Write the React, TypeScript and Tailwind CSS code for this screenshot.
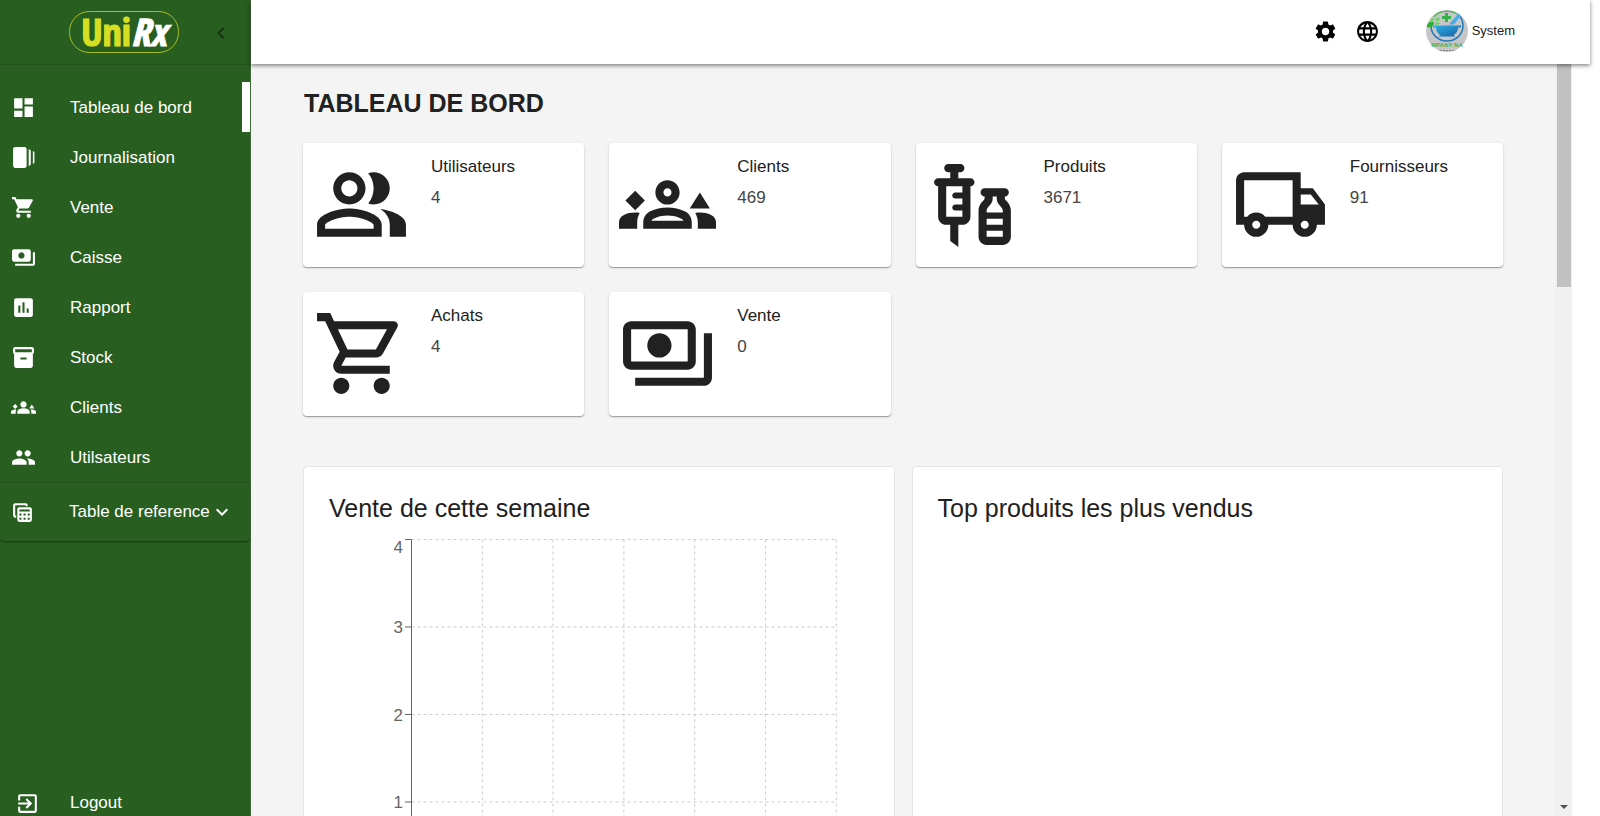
import type { ComponentType } from "react";
import {
  MdAssessment,
  MdChevronLeft,
  MdDashboard,
  MdExitToApp,
  MdExpandMore,
  MdInventory2,
  MdLanguage,
  MdOutlineLocalShipping,
  MdOutlinePayments,
  MdOutlinePeopleAlt,
  MdOutlineShoppingCart,
  MdOutlineTableView,
  MdOutlineVaccines,
  MdPayments,
  MdPeople,
  MdSettings,
  MdShoppingCart,
  MdWebStories,
} from "react-icons/md";

type IconType = ComponentType<{ className?: string }>;

const sides =
  "M4 13.41 1.59 11 4 8.59 6.41 11zM17.5 13 20 9l2.5 4zM5.13 14.1C4.76 14.04 4.39 14 4 14c-.99 0-1.93.21-2.78.58C.48 14.9 0 15.62 0 16.43V18h4.5v-1.61c0-.83.23-1.61.63-2.29zM24 16.43c0-.81-.48-1.53-1.22-1.85C21.93 14.21 20.99 14 20 14c-.39 0-.76.04-1.13.1.4.68.63 1.46.63 2.29V18H24z";
const body =
  "M12 12.75c-1.63 0-3.07.39-4.24.9C6.68 14.13 6 15.21 6 16.38V18h12v-1.61c0-1.18-.68-2.26-1.76-2.73-1.17-.52-2.61-.91-4.24-.91z";
const head = "M12 6c1.66 0 3 1.34 3 3s-1.34 3-3 3-3-1.34-3-3 1.34-3 3-3z";

const GroupsFilled: IconType = ({ className }) => (
  <svg viewBox="0 0 24 24" fill="currentColor" className={className} aria-hidden="true">
    <path d={sides + body + head} />
  </svg>
);

const GroupsOutlined: IconType = ({ className }) => (
  <svg viewBox="0 0 24 24" fill="currentColor" className={className} aria-hidden="true">
    <path d={sides} />
    <path
      fillRule="evenodd"
      d={
        body +
        "M8.07 16c.09-.23.13-.39.91-.69.97-.38 1.99-.56 3.02-.56s2.05.18 3.02.56c.77.3.81.46.91.69H8.07z" +
        head +
        "M12 8c.55 0 1 .45 1 1s-.45 1-1 1-1-.45-1-1 .45-1 1-1z"
      }
    />
  </svg>
);

const navItems: { label: string; icon: IconType; active?: boolean }[] = [
  { label: "Tableau de bord", icon: MdDashboard, active: true },
  { label: "Journalisation", icon: MdWebStories },
  { label: "Vente", icon: MdShoppingCart },
  { label: "Caisse", icon: MdPayments },
  { label: "Rapport", icon: MdAssessment },
  { label: "Stock", icon: MdInventory2 },
  { label: "Clients", icon: GroupsFilled },
  { label: "Utilsateurs", icon: MdPeople },
];

const stats: { label: string; value: number; icon: IconType }[] = [
  { label: "Utilisateurs", value: 4, icon: MdOutlinePeopleAlt },
  { label: "Clients", value: 469, icon: GroupsOutlined },
  { label: "Produits", value: 3671, icon: MdOutlineVaccines },
  { label: "Fournisseurs", value: 91, icon: MdOutlineLocalShipping },
  { label: "Achats", value: 4, icon: MdOutlineShoppingCart },
  { label: "Vente", value: 0, icon: MdOutlinePayments },
];

function Logo() {
  return (
    <svg viewBox="0 0 112 44" className="h-[44px] w-[112px] overflow-visible" role="img" aria-label="UniRx">
      <rect x="1.5" y="1.5" width="109" height="41" rx="20" fill="none" stroke="#a9bf20" strokeWidth="1" />
      <g
        fontSize="38"
        fontWeight="700"
        strokeWidth="1.2"
        fontFamily="'Liberation Sans Narrow', 'Open Sans Condensed', 'Roboto Condensed', Lato, sans-serif"
      >
        <text x="63" y="35.500" textAnchor="end" fill="#d7df23" stroke="#d7df23">
          Uni
        </text>
        <text x="63" y="35.500" fill="#ffffff" stroke="#ffffff" fontStyle="italic">
          Rx
        </text>
      </g>
    </svg>
  );
}

function Sidebar() {
  return (
    <aside className="flex w-[251px] shrink-0 flex-col border-r border-[#3f6b38] bg-[#285f20] text-white">
      <div className="flex h-[65px] shrink-0 items-center border-b border-[#23541c] pl-[68px]">
        <Logo />
        <button type="button" aria-label="Réduire le menu" className="ml-[29px] pt-0.5 text-[#16330f]">
          <MdChevronLeft className="size-6" />
        </button>
      </div>
      <nav className="flex min-h-0 flex-1 flex-col">
        <ul className="pt-[17px]">
          {navItems.map(({ label, icon: Icon, active }) => (
            <li key={label}>
              <a
                href="#"
                className={
                  active
                    ? "flex h-[50px] items-center gap-[34px] border-r-8 border-white pl-[11px]"
                    : "flex h-[50px] items-center gap-[34px] pl-[11px]"
                }
              >
                <Icon className="size-[25px] shrink-0" />
                <span className="pt-0.5">{label}</span>
              </a>
            </li>
          ))}
        </ul>
        <button
          type="button"
          className="flex h-[59px] shrink-0 items-center rounded-b border-t border-[#23541c] pl-2.5 shadow-[0_1px_2px_rgba(0,0,0,0.45)]"
        >
          <MdOutlineTableView className="mr-[34px] size-[25px] shrink-0" />
          Table de reference
          <MdExpandMore className="size-6" />
        </button>
        <a href="#" className="mt-auto flex h-[26px] items-center gap-[30px] pl-[15px]">
          <MdExitToApp className="size-[25px] shrink-0" />
          Logout
        </a>
      </nav>
    </aside>
  );
}

function Avatar() {
  return (
    <svg viewBox="0 0 42 42" className="size-[42px] overflow-visible" role="img" aria-label="Company">
      <defs>
        <clipPath id="avatar-disc">
          <circle cx="21" cy="21" r="21" />
        </clipPath>
        <linearGradient id="bowl" x1="0" x2="1" y1="0" y2="1">
          <stop offset="0" stopColor="#2fb0e6" />
          <stop offset="1" stopColor="#155fa6" />
        </linearGradient>
      </defs>
      <g clipPath="url(#avatar-disc)">
        <rect width="42" height="42" fill="#c6c6c8" />
        <path d="M5 16a16 15 0 0 0 32 0c0-4-1-7-3-9.500" fill="none" stroke="#2079b8" strokeWidth="1.500" />
        <path d="M8 7C12 1 24-1 31 4" fill="none" stroke="#45b649" strokeWidth="1.200" />
        <path d="M7 15.500h28v2h-3c0 5-3 6-4 7.500l1 1.500H13l1-1.500c-1-1.500-4-2.500-4-7.500H7z" fill="url(#bowl)" />
        <path d="M23 14.500 32 4c2-1 3 1 2 2.500l-6 8z" fill="#4aa9e8" />
        <path d="M19 3h3v3h3v3h-3v3h-3V9h-3V6h3z" fill="#35b14a" />
        <path d="M1 15c1-3 4-4 7-3 0 4-2 6-7 5z" fill="#2fae35" />
        <path d="M4 11c0-2 2-3 4-3 0 2-1 4-4 3zM9 9c2-2 4-2 5 0-1 3-4 3-5 0zM9 14c1-2 3-2 5-1-1 2-4 3-5 1z" fill="#74cd6a" />
        <path d="M11 40.500h20" stroke="#808080" strokeWidth="1" strokeDasharray="2 1" />
      </g>
      <text
        x="21"
        y="37"
        textAnchor="middle"
        fontSize="6"
        fontWeight="700"
        fontFamily="Liberation Sans, sans-serif"
        fill="#3cb84a"
      >
        MPANY NA
      </text>
    </svg>
  );
}

function Header() {
  return (
    <header className="relative z-10 mr-2.5 flex h-16 shrink-0 items-center justify-end bg-white pr-[75px] pb-[2px] shadow-[0_2px_4px_rgba(0,0,0,0.25),0_1px_4px_rgba(0,0,0,0.3)]">
      <button type="button" aria-label="Paramètres" className="mr-[17px] text-black">
        <MdSettings className="size-[25px]" />
      </button>
      <button type="button" aria-label="Langue" className="mr-[46px] text-black">
        <MdLanguage className="size-[25px]" />
      </button>
      <button type="button" className="flex items-center gap-1 text-[13px]">
        <Avatar />
        System
      </button>
    </header>
  );
}

function StatCard({ label, value, icon: Icon }: { label: string; value: number; icon: IconType }) {
  return (
    <article className="flex h-[124px] gap-[21px] rounded bg-white pl-2.5 shadow-[0_1px_1px_rgba(0,0,0,0.3),0_1px_3px_rgba(0,0,0,0.12)]">
      <Icon className="mt-[13px] size-[97px] shrink-0" />
      <div className="pt-2 leading-[31px]">
        <h2>{label}</h2>
        <p className="text-[#444]">{value}</p>
      </div>
    </article>
  );
}

function WeekChart() {
  const step = 87.5;
  const columns = [0, 1, 2, 3, 4, 5, 6];
  const ticks = [4, 3, 2, 1, 0];
  return (
    <svg width="460" height="390" className="ml-[55px] shrink-0" role="img" aria-label="Vente de cette semaine">
      <g stroke="#ccc" strokeDasharray="3 3">
        {columns.map((c) => (
          <line key={c} x1={27.5 + c * 70.8} x2={27.5 + c * 70.8} y1="13.500" y2="363.500" />
        ))}
        {ticks.map((t, i) => (
          <line key={t} x1="27.500" x2="452.500" y1={13.5 + i * step} y2={13.5 + i * step} />
        ))}
      </g>
      <g stroke="#666">
        <line x1="27.500" x2="27.500" y1="13.500" y2="363.500" />
        {ticks.map((t, i) => (
          <line key={t} x1="21" x2="27.500" y1={13.5 + i * step} y2={13.5 + i * step} />
        ))}
      </g>
      <g fill="#666" fontSize="17" textAnchor="end">
        {ticks.map((t, i) => (
          <text key={t} x="19" y={i === 0 ? 26.5 : 19.5 + i * step}>
            {t}
          </text>
        ))}
      </g>
    </svg>
  );
}

const panel = "flex h-[480px] flex-col rounded border border-[#e4e4e4] bg-white px-[25px] pt-[23px]";

function Dashboard() {
  return (
    <main className="min-w-0 flex-1 overflow-hidden bg-[#f4f4f4] px-[52px] pt-[21px]">
      <h1 className="mb-[22px] pl-px text-[25px] leading-9 font-bold">TABLEAU DE BORD</h1>
      <section className="grid grid-cols-4 gap-[25px]">
        {stats.map((s) => (
          <StatCard key={s.label} {...s} />
        ))}
      </section>
      <section className="mt-[50px] grid grid-cols-2 gap-[17px]">
        <article className={panel}>
          <h2 className="text-[25px] leading-9">Vente de cette semaine</h2>
          <WeekChart />
        </article>
        <article className={panel}>
          <h2 className="text-[25px] leading-9">Top produits les plus vendus</h2>
        </article>
      </section>
    </main>
  );
}

function ScrollTrack() {
  return (
    <div className="mr-7 flex w-[17px] shrink-0 flex-col items-center justify-between bg-[#f0f0f0]" aria-hidden="true">
      <div className="h-[223px] w-[14px] bg-[#c1c1c1]" />
      <svg viewBox="0 0 8 4" className="mb-[7px] h-1 w-2" fill="#505050">
        <path d="M0 0h8L4 4z" />
      </svg>
    </div>
  );
}

export default function App() {
  return (
    <div className="flex h-screen overflow-hidden bg-white font-['Liberation_Sans',Arial,sans-serif] text-[17px] text-[#212121]">
      <Sidebar />
      <div className="flex min-w-0 flex-1 flex-col">
        <Header />
        <div className="flex min-h-0 flex-1">
          <Dashboard />
          <ScrollTrack />
        </div>
      </div>
    </div>
  );
}
